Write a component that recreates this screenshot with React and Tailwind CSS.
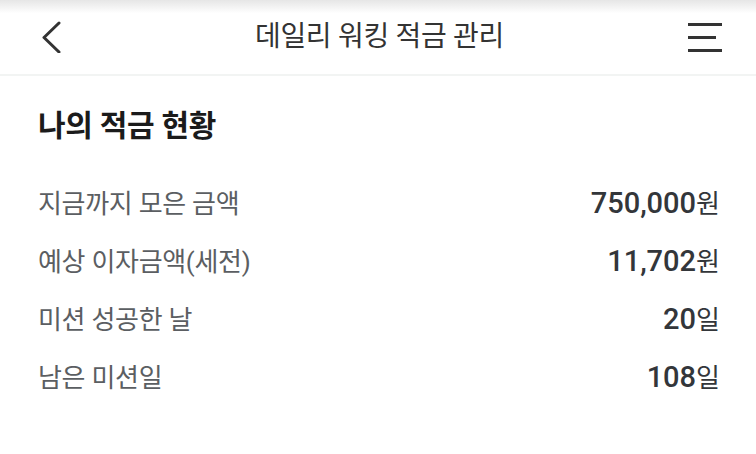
const KR = "font-['Roboto','Noto_Sans_CJK_KR',sans-serif]";

const rows = [
  { label: "지금까지 모은 금액", num: "750,000", unit: "원" },
  { label: "예상 이자금액(세전)", num: "11,702", unit: "원" },
  { label: "미션 성공한 날", num: "20", unit: "일" },
  { label: "남은 미션일", num: "108", unit: "일" },
];

const App = () => {
  return (
    <div className={`w-[756px] h-[454px] bg-white overflow-hidden ${KR}`}>
      {/* Header */}
      <div className="h-[76px] bg-gradient-to-b from-[#e6e6e6] via-white via-[18%] to-white border-b-2 border-[#f2f4f3] flex items-center justify-between pl-[41px] pr-[34px]">
        <svg width="20" height="32" viewBox="0 0 20 32" className="text-[#333]">
          <polyline points="18,2 3,16.5 18,31" fill="none" stroke="currentColor" strokeWidth="3" strokeLinecap="round" strokeLinejoin="round" />
        </svg>
        <h1 className="text-[28px] text-[#333] font-normal tracking-[-0.3px] leading-none pl-[10px]">데일리 워킹 적금 관리</h1>
        <div className="w-[34px] flex flex-col gap-[10px]">
          <span className="block h-[3px] w-[34px] bg-[#333]" />
          <span className="block h-[3px] w-[28px] bg-[#333]" />
          <span className="block h-[3px] w-[34px] bg-[#333]" />
        </div>
      </div>

      {/* Content */}
      <div className="pl-[38px] pr-[36px] pt-[30px]">
        <h2 className="text-[30px] font-bold text-[#1b1b1b] leading-[40px] tracking-[-0.3px]">나의 적금 현황</h2>
        <div className="mt-[40px] flex flex-col gap-[22px]">
          {rows.map((row) => (
            <div key={row.label} className="flex items-center justify-between h-[36px]">
              <span className="text-[26px] text-[#5b5e62] tracking-[-0.3px]">{row.label}</span>
              <span className="text-[#33363a]">
                <span className="text-[29px] font-medium">{row.num}</span>
                <span className="text-[26px]">{row.unit}</span>
              </span>
            </div>
          ))}
        </div>
      </div>
    </div>
  );
};

export default App;
